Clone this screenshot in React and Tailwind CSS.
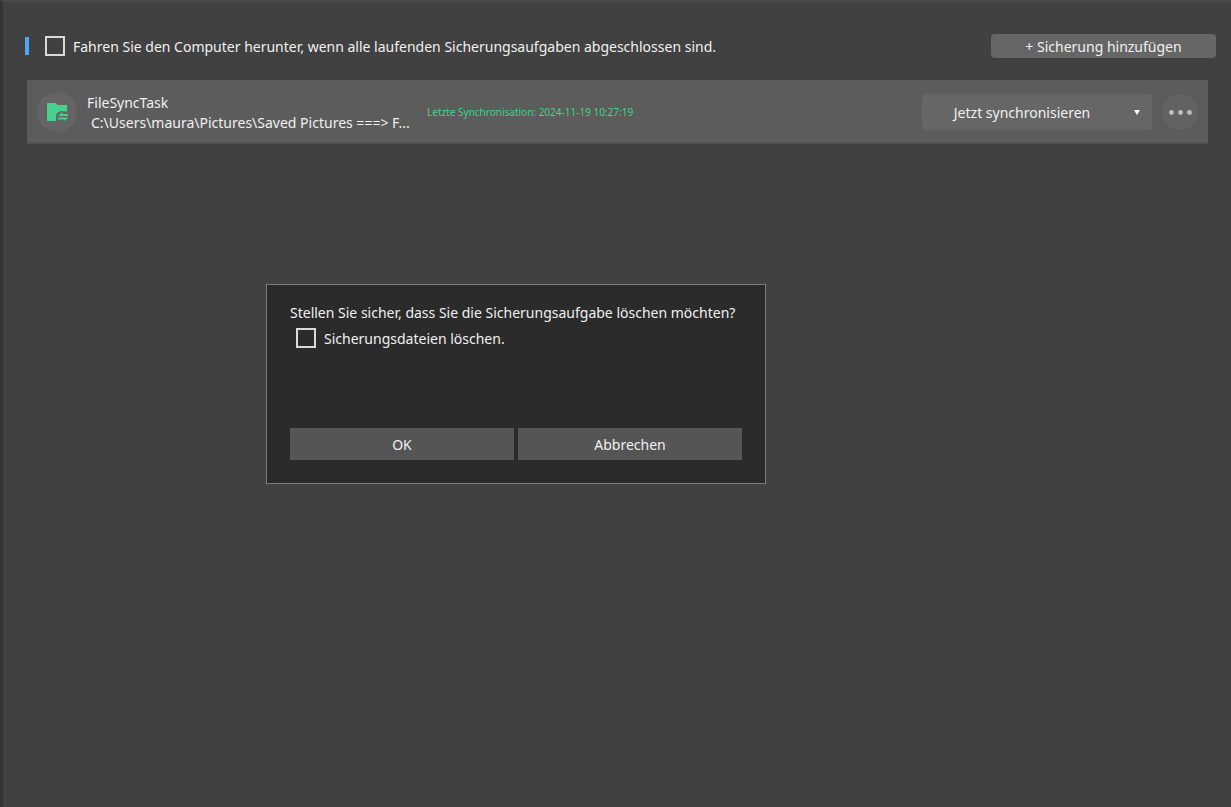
import { useState } from 'react';

const tasks = [
  {
    id: 1,
    name: 'FileSyncTask',
    path: 'C:\\Users\\maura\\Pictures\\Saved Pictures ===> F...',
    status: 'Letzte Synchronisation: 2024-11-19 10:27:19',
  },
];

const FolderSyncIcon = () => (
  <svg viewBox="0 0 22 20" className="h-5 w-[22px]" aria-hidden="true">
    <path d="M1 1h8.500l2 2H21v6.500h-3c-1-.7-3.200-.7-4.600 0c-2.400 1-3.700 3-3.400 6v3.500H1z" fill="#47cf8c" />
    <path d="M12 13.900h10v-1.900h-5.700V9.800z" fill="#47cf8c" />
    <path d="M12 15.400h10.300l-4.600 4v-2H12z" fill="#47cf8c" />
  </svg>
);

const Checkbox = ({ label, checked, onChange }) => (
  <label className="flex items-center gap-2">
    <input
      type="checkbox"
      checked={checked}
      onChange={(e) => onChange(e.target.checked)}
      className="h-5 w-5 shrink-0 appearance-none border-2 border-[#dadada] checked:bg-[#4da6f5]"
    />
    <span className="pt-0.5">{label}</span>
  </label>
);

const TaskRow = ({ task }) => (
  <li className="flex items-center border-b-2 border-[#525252] bg-[#5c5c5c] px-2.5 pt-[11px] pb-[9px]">
    <div className="flex h-10 w-10 shrink-0 items-center justify-center rounded-full bg-[#646464]">
      <FolderSyncIcon />
    </div>
    <div className="ml-2.5 w-[340px] shrink-0 pt-0.5 leading-5">
      <div>{task.name}</div>
      <div className="pl-1 whitespace-nowrap">{task.path}</div>
    </div>
    <div className="flex-1 text-[10px] text-[#47cf8c]">{task.status}</div>
    <div className="relative w-[230px] shrink-0">
      <select
        aria-label="Aktion"
        className="h-9 w-full appearance-none rounded bg-[#666666] pt-0.5 pr-[30px] text-center"
      >
        <option>Jetzt synchronisieren</option>
      </select>
      <svg viewBox="0 0 6 5" className="pointer-events-none absolute top-4 right-3 h-[5px] w-1.5" aria-hidden="true">
        <path d="M0 0h6L3 5z" fill="#fff" />
      </svg>
    </div>
    <button
      aria-label="Mehr"
      className="ml-2.5 flex h-9 w-9 shrink-0 items-center justify-center rounded-full bg-[#626262]"
    >
      <svg viewBox="0 0 24 6" className="h-1.5 w-6" aria-hidden="true">
        <circle cx="3.500" cy="3.500" r="2.400" fill="#c0c0c0" />
        <circle cx="12.500" cy="3.500" r="2.400" fill="#c0c0c0" />
        <circle cx="21.500" cy="3.500" r="2.400" fill="#c0c0c0" />
      </svg>
    </button>
  </li>
);

const DeleteDialog = ({ onClose }) => {
  const [deleteFiles, setDeleteFiles] = useState(false);

  return (
    <div
      role="dialog"
      aria-labelledby="delete-title"
      className="absolute top-[282px] left-[263px] w-[500px] border border-[#7a7a7a] bg-[#2b2b2b] px-[23px] pt-[18px] pb-[23px]"
    >
      <p id="delete-title" className="leading-5">
        Stellen Sie sicher, dass Sie die Sicherungsaufgabe löschen möchten?
      </p>
      <div className="mt-1 pl-1.5">
        <Checkbox label="Sicherungsdateien löschen." checked={deleteFiles} onChange={setDeleteFiles} />
      </div>
      <div className="mt-[79px] grid grid-cols-2 gap-1">
        <button onClick={onClose} className="h-8 bg-[#555555] pt-0.5">OK</button>
        <button onClick={onClose} className="h-8 bg-[#555555] pt-0.5">Abbrechen</button>
      </div>
    </div>
  );
};

export default function App() {
  const [shutdown, setShutdown] = useState(false);
  const [dialogOpen, setDialogOpen] = useState(true);

  return (
    <main className="relative min-h-screen border-t-2 border-l-3 border-t-[#4b4b4b] border-l-[#343434] bg-[#414141] font-['Noto_Sans',sans-serif] text-[14px] leading-5 text-[#f0f0f0]">
      {/* Toolbar */}
      <div className="flex items-center justify-between pt-8 pr-[15px] pl-[22px]">
        <div className="flex items-center gap-4">
          <span className="h-[18px] w-1 bg-[#4da6f5]" />
          <Checkbox
            label="Fahren Sie den Computer herunter, wenn alle laufenden Sicherungsaufgaben abgeschlossen sind."
            checked={shutdown}
            onChange={setShutdown}
          />
        </div>
        <button className="h-6 w-[225px] rounded bg-[#666666] pt-0.5">+ Sicherung hinzufügen</button>
      </div>

      {/* Tasks */}
      <ul className="mt-[22px] mr-[23px] ml-6">
        {tasks.map((task) => (
          <TaskRow key={task.id} task={task} />
        ))}
      </ul>

      {dialogOpen && <DeleteDialog onClose={() => setDialogOpen(false)} />}
    </main>
  );
}
